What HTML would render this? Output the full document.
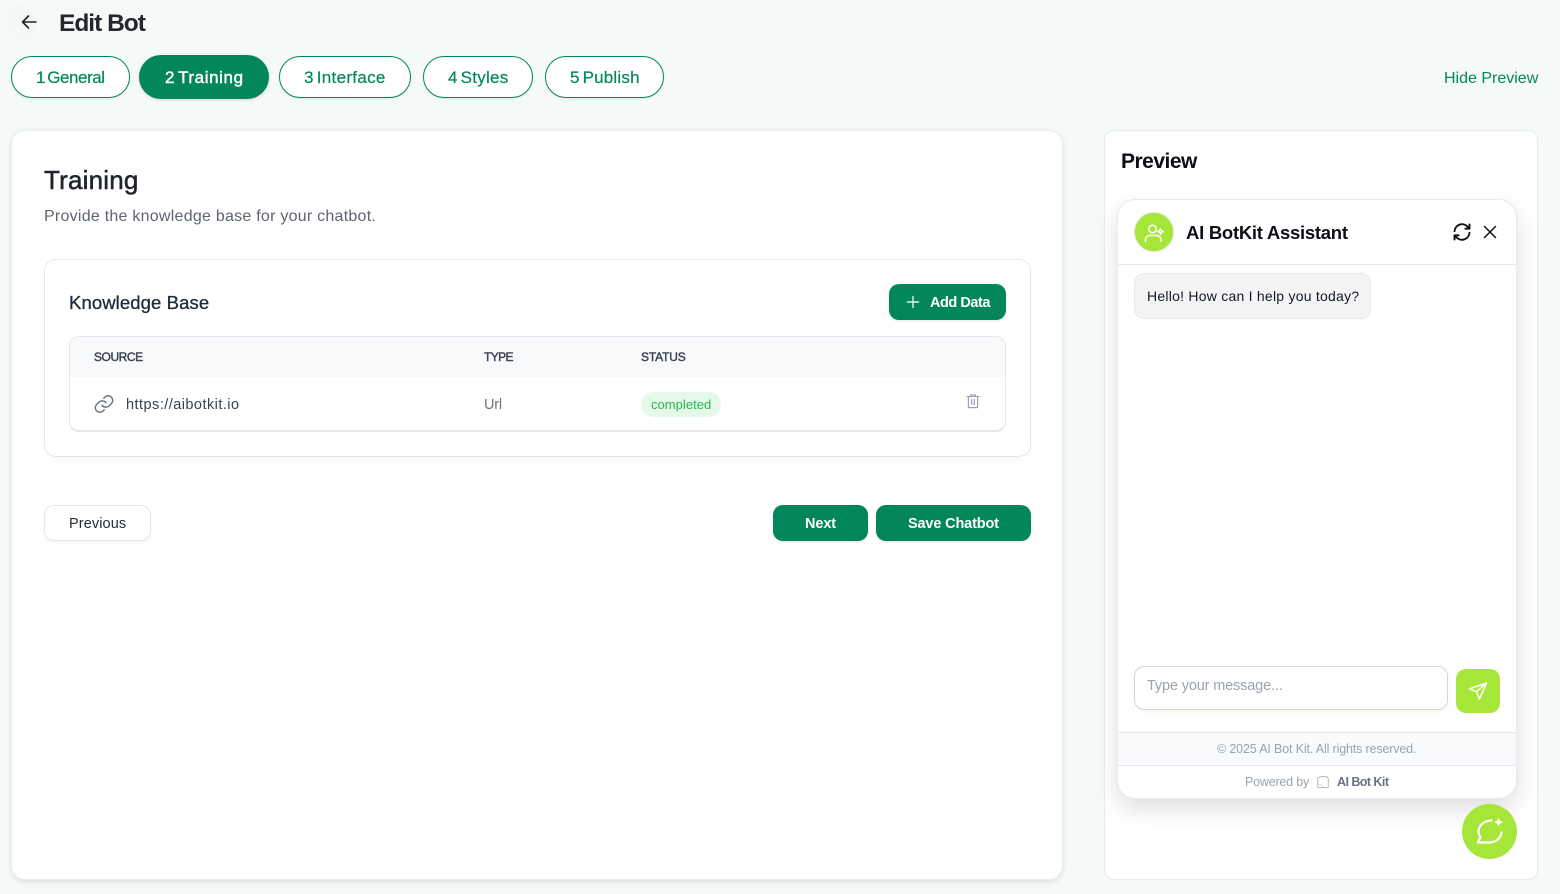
<!DOCTYPE html>
<html lang="en"><head><meta charset="utf-8"><title>Edit Bot</title>
<style>
*{box-sizing:border-box}
html,body{margin:0;padding:0}
body{width:1560px;height:894px;overflow:hidden;position:relative;background:#f5f9f8;font-family:"Liberation Sans",sans-serif;color:#1f2329}
.a{position:absolute}
.t{position:absolute;white-space:nowrap;line-height:20px;height:20px}
.m{-webkit-text-stroke:.3px currentColor}
.pill{position:absolute;border-radius:22px;border:1px solid #03875a;background:#fff;box-shadow:0 1px 2px rgba(0,0,0,.08)}
.g{color:#03875a;font-size:17px;word-spacing:-2px;-webkit-text-stroke:.2px currentColor}
.btn{position:absolute;background:#03875a;border-radius:10px;box-shadow:0 1px 2px rgba(0,0,0,.1)}
.w{color:#fff;font-size:14.5px;font-weight:700}
.h{font-size:12px;color:#374151;-webkit-text-stroke:.4px currentColor}
svg{position:absolute;fill:none;stroke-linecap:round;stroke-linejoin:round}
</style></head><body>

<div class="a" style="left:8px;top:5px;width:28px;height:34px;border-radius:14px;background:#f3f7f6"></div>
<svg style="left:19px;top:12px" width="20" height="20" viewBox="0 0 20 20" stroke="#1f2329" stroke-width="1.6"><path d="M17 10H3.5M9.5 4 3.5 10l6 6"/></svg>
<span class="t" style="left:59px;top:14px;font-size:24.5px;font-weight:700;letter-spacing:-1px;color:#23272e">Edit Bot</span>

<div class="pill" style="left:11px;top:56px;width:119px;height:42px"></div>
<span class="t g" style="left:36px;top:68px;letter-spacing:-.45px">1 General</span>
<div class="a" style="left:139px;top:55px;width:130px;height:44px;border-radius:22px;background:#03875a;box-shadow:0 1px 3px rgba(0,0,0,.15)"></div>
<span class="t g" style="left:165px;top:68px;color:#fff;letter-spacing:.6px;-webkit-text-stroke:.45px #fff">2 Training</span>
<div class="pill" style="left:279px;top:56px;width:132px;height:42px"></div>
<span class="t g" style="left:304px;top:68px;letter-spacing:.3px">3 Interface</span>
<div class="pill" style="left:423px;top:56px;width:110px;height:42px"></div>
<span class="t g" style="left:448px;top:68px;letter-spacing:.25px">4 Styles</span>
<div class="pill" style="left:545px;top:56px;width:119px;height:42px"></div>
<span class="t g" style="left:570px;top:68px;letter-spacing:.2px">5 Publish</span>
<span class="t" style="left:1444px;top:69px;font-size:16px;color:#03875a;letter-spacing:0">Hide Preview</span>

<!-- main card -->
<div class="a" style="left:11px;top:130px;width:1052px;height:750px;background:#fff;border:1px solid #e6ecf1;border-radius:14px;box-shadow:0 2px 6px rgba(0,0,0,.1)"></div>
<span class="t" style="left:44px;top:170px;font-size:26px;color:#20242b;letter-spacing:.2px;-webkit-text-stroke:.5px #20242b">Training</span>
<span class="t" style="left:44px;top:207px;font-size:16px;color:#5d6472;letter-spacing:.25px">Provide the knowledge base for your chatbot.</span>

<div class="a" style="left:44px;top:259px;width:987px;height:198px;background:#fff;border:1px solid #e5e7eb;border-radius:12px;box-shadow:0 8px 14px rgba(0,0,0,.025)"></div>
<span class="t m" style="left:69px;top:293px;font-size:18.5px;color:#1f2937;letter-spacing:.1px">Knowledge Base</span>
<div class="btn" style="left:889px;top:284px;width:117px;height:36px"></div>
<svg style="left:905px;top:294px" width="16" height="16" viewBox="0 0 16 16" stroke="#dff3ea" stroke-width="1.4"><path d="M8 2.5v11M2.5 8h11"/></svg>
<span class="t w" style="left:930px;top:293px;letter-spacing:-.45px">Add Data</span>

<div class="a" style="left:69px;top:336px;width:937px;height:96px;background:#fff;border:1px solid #e5e7eb;border-bottom-width:2px;border-radius:10px;overflow:hidden">
  <div style="height:40px;background:#f8f9fb"></div>
</div>
<span class="t h" style="left:94px;top:347px;letter-spacing:-.45px">SOURCE</span>
<span class="t h" style="left:484px;top:347px;letter-spacing:-.6px">TYPE</span>
<span class="t h" style="left:641px;top:347px;letter-spacing:-.15px">STATUS</span>
<svg style="left:93px;top:393px" width="22" height="22" viewBox="0 0 24 24" stroke="#6b7280" stroke-width="1.6"><path d="M10 13.5a5 5 0 0 0 7.500.5l3-3a5 5 0 0 0-7-7l-1.700 1.700"/><path d="M14 10.500a5 5 0 0 0-7.500-.5l-3 3a5 5 0 0 0 7 7l1.700-1.700"/></svg>
<span class="t" style="left:126px;top:395px;font-size:14.5px;color:#374151;letter-spacing:.46px">https://aibotkit.io</span>
<span class="t" style="left:484px;top:395px;font-size:14.5px;color:#6b7280;letter-spacing:-.2px">Url</span>
<div class="a" style="left:641px;top:392px;width:80px;height:25px;border-radius:13px;background:#e4f9e9"></div>
<span class="t" style="left:651px;top:395px;font-size:13px;color:#28b84f;letter-spacing:.03px">completed</span>
<svg style="left:965px;top:393px" width="16" height="16" viewBox="0 0 16 16" stroke="#9ca3af" stroke-width="1.2"><path d="M2 3.500h12M5.700 3.500V1.800h4.600v1.700M3.400 3.500v10.200c0 .5.400.9.900.9h7.400c.5 0 .9-.4.900-.9V3.500M6.700 6.500v5M9.300 6.500v5"/></svg>

<div class="a" style="left:44px;top:505px;width:107px;height:36px;background:#fff;border:1px solid #e5e7eb;border-radius:10px;box-shadow:0 1px 2px rgba(0,0,0,.06)"></div>
<span class="t" style="left:69px;top:514px;font-size:14.5px;color:#1f2937;letter-spacing:.1px">Previous</span>
<div class="btn" style="left:773px;top:505px;width:95px;height:36px"></div>
<span class="t w" style="left:805px;top:514px;letter-spacing:-.1px">Next</span>
<div class="btn" style="left:876px;top:505px;width:155px;height:36px"></div>
<span class="t w" style="left:908px;top:514px;letter-spacing:-.15px">Save Chatbot</span>

<!-- preview panel -->
<div class="a" style="left:1104px;top:130px;width:434px;height:750px;background:#fff;border:1px solid #e5ebf3;border-radius:10px"></div>
<span class="t" style="left:1121px;top:152px;font-size:21px;font-weight:700;color:#0c0f14;letter-spacing:-.5px">Preview</span>

<div class="a" style="left:1117px;top:199px;width:400px;height:600px;background:#fff;border:1px solid #e5eaf2;border-radius:18px;box-shadow:0 10px 24px rgba(0,0,0,.13)"></div>
<div class="a" style="left:1134px;top:212px;width:40px;height:40px;border-radius:50%;background:#a6e639;border:1px solid #dfe8d5"></div>
<svg style="left:1143px;top:222px" width="24" height="24" viewBox="0 0 24 24" stroke="#fff" stroke-width="1.5"><circle cx="9.500" cy="7" r="3.800"/><path d="M2.500 19.500v-1.700c0-2.500 2-4.300 4.500-4.300h6.500c2.500 0 4.500 1.800 4.500 4.300v1.700M17.500 6.800c.4 1.800 1 2.400 2.800 2.800-1.800.4-2.400 1-2.800 2.800-.4-1.800-1-2.400-2.800-2.800 1.800-.4 2.400-1 2.800-2.800z"/></svg>
<span class="t" style="left:1186px;top:223px;font-size:18.500px;font-weight:700;color:#0c0f14;letter-spacing:-.27px">AI BotKit Assistant</span>
<svg style="left:1452px;top:222px" width="20" height="20" viewBox="0 0 24 24" stroke="#111" stroke-width="2.300"><path d="M3 11a9 9 0 0 1 15.500-5.500L21 8M21 3v5h-5M21 13a9 9 0 0 1-15.500 5.500L3 16M3 21v-5h5"/></svg>
<svg style="left:1481px;top:223px" width="18" height="18" viewBox="0 0 18 18" stroke="#111" stroke-width="1.500"><path d="M3.500 3.500l11 11M14.500 3.500l-11 11"/></svg>
<div class="a" style="left:1118px;top:264px;width:398px;height:1px;background:#e5e9f0"></div>

<div class="a" style="left:1134px;top:273px;width:237px;height:46px;background:#f4f4f5;border:1px solid #e8e9ec;border-radius:10px"></div>
<span class="t" style="left:1147px;top:286px;font-size:14px;color:#111827;letter-spacing:.24px">Hello! How can I help you today?</span>

<div class="a" style="left:1134px;top:666px;width:314px;height:44px;background:#fff;border:1px solid #d1d5db;border-radius:10px;box-shadow:0 2px 8px rgba(166,230,57,.1)"></div>
<span class="t" style="left:1147px;top:676px;font-size:14.500px;color:#9ca3af;letter-spacing:-.15px">Type your message...</span>
<div class="a" style="left:1456px;top:669px;width:44px;height:44px;border-radius:10px;background:#a6e639"></div>
<svg style="left:1468px;top:681px" width="20" height="20" viewBox="0 0 20 20" stroke="#fff" stroke-width="1.500"><path d="M18.500 2 1.500 7.800l7 2.900 2.900 7.300L18.500 2zM8.500 10.700 18.500 2"/></svg>

<div class="a" style="left:1118px;top:732px;width:398px;height:34px;background:#f8fafc;border-top:1px solid #e5e9f0;border-bottom:1px solid #e5e9f0"></div>
<span class="t" style="left:1217px;top:739px;font-size:12.500px;color:#9ca3af;letter-spacing:-.15px">© 2025 AI Bot Kit. All rights reserved.</span>
<span class="t" style="left:1245px;top:772px;font-size:12.500px;color:#9ca3af;letter-spacing:-.2px">Powered by</span>
<svg style="left:1316px;top:775px" width="14" height="14" viewBox="0 0 14 14" stroke="#b5bac2" stroke-width="1"><path d="M2.500 2.500 5 1.500h4.500l2 1c.5.300.8.700.8 1.200v8c0 .5-.4.800-.8.800H2.500c-.5 0-.8-.3-.8-.8V3.500c0-.4.300-.8.800-1z"/><path d="M4 9.500h.5M6 11h.5"/></svg>
<span class="t" style="left:1337px;top:772px;font-size:12.500px;font-weight:700;color:#6b7280;letter-spacing:-.55px">AI Bot Kit</span>

<div class="a" style="left:1462px;top:804px;width:55px;height:55px;border-radius:50%;background:#a6e639"></div>
<svg style="left:1474px;top:816px" width="32" height="32" viewBox="0 0 32 32" stroke="#fff" stroke-width="2.200"><path d="M17.500 4.500C10.500 4.500 4.500 9 4.500 15.500c0 2.300.7 4.200 2 5.800L3.800 26.500h11.700c6 0 11-4 12-10"/><path d="M24.500 2.500c.4 2.500 1.200 3.300 3.700 3.700-2.500.4-3.300 1.200-3.700 3.700-.4-2.500-1.200-3.300-3.700-3.700 2.500-.4 3.300-1.200 3.700-3.700z" fill="#fff" stroke-width="1"/></svg>

</body></html>
